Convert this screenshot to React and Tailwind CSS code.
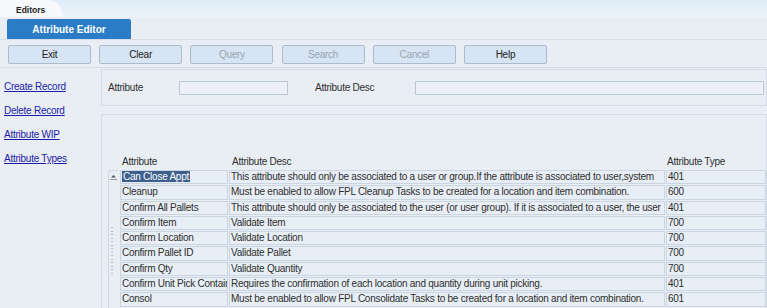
import React from "react";

const buttons = [
  { label: "Exit", enabled: true },
  { label: "Clear", enabled: true },
  { label: "Query", enabled: false },
  { label: "Search", enabled: false },
  { label: "Cancel", enabled: false },
  { label: "Help", enabled: true },
];

const links = ["Create Record", "Delete Record", "Attribute WIP", "Attribute Types"];

const rows = [
  ["Can Close Appt", "This attribute should only be associated to a user or group.If the attribute is associated to user,system", "401"],
  ["Cleanup", "Must be enabled to allow FPL Cleanup Tasks to be created for a location and item combination.", "600"],
  ["Confirm All Pallets", "This attribute should only be associated to the user (or user group). If it is associated to a user, the user", "401"],
  ["Confirm Item", "Validate Item", "700"],
  ["Confirm Location", "Validate Location", "700"],
  ["Confirm Pallet ID", "Validate Pallet", "700"],
  ["Confirm Qty", "Validate Quantity", "700"],
  ["Confirm Unit Pick Container", "Requires the confirmation of each location and quantity during unit picking.", "401"],
  ["Consol", "Must be enabled to allow FPL Consolidate Tasks to be created for a location and item combination.", "601"],
];

const cell =
  "h-[14.3px] bg-[#e8eef6] border border-[#c9d5e3] pl-[1px] leading-[12px] whitespace-nowrap overflow-hidden";

export default function App() {
  return (
    <div
      className="w-[767px] h-[308px] overflow-hidden bg-[#e9eef5] text-[10px] tracking-[-0.25px] text-[#2e2e2e]"
      style={{ fontFamily: '"Liberation Sans", Arial, sans-serif' }}
    >
      {/* top strip */}
      <div className="h-[17px] bg-gradient-to-b from-[#deebf8] to-[#edf3fa] flex items-end">
        <div className="h-[17px] w-[62px] bg-[#f7f9fc] rounded-tr-[14px] pl-[16px] pt-[4px] text-[8.5px] tracking-normal font-bold text-[#222]">
          Editors
        </div>
      </div>

      {/* title tab */}
      <div className="h-[23px] flex items-end pl-[7px] border-b border-[#d6dde7]">
        <div className="w-[124px] h-[20px] bg-[#2b7cc6] rounded-t-[2px] text-white font-bold text-[10px] tracking-normal flex items-center justify-center">
          Attribute Editor
        </div>
      </div>

      {/* toolbar */}
      <div className="h-[28px] flex items-center gap-[8.2px] pl-[8px] pt-[1px] border-b border-[#d6dde7]">
        {buttons.map((b) => (
          <button
            key={b.label}
            className={`w-[83px] h-[19px] bg-[#d6e4f3] border border-[#adbccd] rounded-[2px] text-[10px] leading-[17px] ${
              b.enabled ? "text-[#222]" : "text-[#9aa4b0]"
            }`}
          >
            {b.label}
          </button>
        ))}
      </div>

      {/* body */}
      <div className="flex">
        {/* sidebar */}
        <div className="w-[101px] shrink-0 flex flex-col gap-[10px] pl-[4px] pt-[12px]">
          {links.map((l) => (
            <a key={l} href="#" className="text-[#1c1ca8] underline leading-[14px]">
              {l}
            </a>
          ))}
        </div>

        {/* main */}
        <div className="flex-1 flex flex-col">
          <div className="h-[37px] mt-[1px] border border-[#d3dbe6] flex items-center">
            <span className="ml-[6px] w-[71px]">Attribute</span>
            <div className="w-[109px] h-[14px] border border-[#bcc8d6] bg-[#edf1f7]" />
            <span className="ml-[27px] w-[100px]">Attribute Desc</span>
            <div className="flex-1 mr-[2px] h-[14px] border border-[#bcc8d6] bg-[#edf1f7]" />
          </div>

          <div className="mt-[8px] border border-[#d3dbe6] h-[200px] flex">
            {/* scrollbar */}
            <div className="w-[18px] shrink-0 pt-[55px] pl-[6px]">
              <div className="w-[10px] h-[150px] border-l border-t rounded-tl-[3px] border-[#d0d8e2] flex flex-col items-center">
                <svg width="9" height="9" viewBox="0 0 9 9" className="mt-[1px]">
                  <path d="M2 5.5 L4.5 3 L7 5.5 Z" fill="#555" />
                  <path d="M1 7.5 H8" stroke="#999" strokeWidth="1" />
                </svg>
                <div className="mt-[46px] -ml-[3px] flex flex-col gap-[2.5px]">
                  {Array.from({ length: 14 }).map((_, i) => (
                    <div key={i} className="w-[2px] h-[1px] bg-[#b6bfca]" />
                  ))}
                </div>
              </div>
            </div>

            {/* table */}
            <div className="flex-1 pt-[37px]">
              <div className="flex h-[18px] items-center">
                <span className="w-[109px] pl-[2px]">Attribute</span>
                <span className="w-[437px] pl-[3px]">Attribute Desc</span>
                <span className="pl-[1px]">Attribute Type</span>
              </div>
              <div className="flex flex-col gap-[1px]">
                {rows.map((r, i) => (
                  <div key={r[0]} className="flex gap-[1px]">
                    <div className={`${cell} w-[108px]`}>
                      {i === 0 ? (
                        <span className="bg-[#3d5f8c] text-white px-[1px]">{r[0]}</span>
                      ) : (
                        r[0]
                      )}
                    </div>
                    <div className={`${cell} w-[436px]`}>{r[1]}</div>
                    <div className={`${cell} w-[100px]`}>{r[2]}</div>
                  </div>
                ))}
              </div>
            </div>
          </div>
        </div>
      </div>
    </div>
  );
}
